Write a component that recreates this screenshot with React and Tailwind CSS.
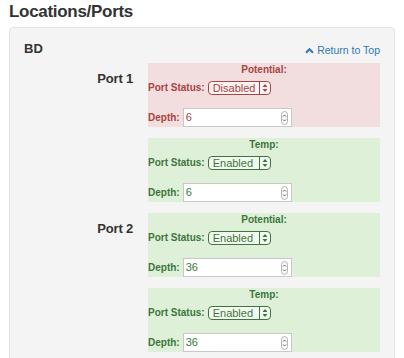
import { useState } from "react";

const tones = {
    error: {
        box: "bg-[#f2dede]",
        text: "text-[#a94442]",
        border: "border-[#a94442]",
        select: "bg-[#fbf3f3]",
    },
    success: {
        box: "bg-[#dff0d8]",
        text: "text-[#3c763d]",
        border: "border-[#3c763d]",
        select: "bg-[#f3f9f0]",
    },
};

const ChevronUp = () => (
    <svg width="9" height="7" viewBox="0 0 10 8" className="mr-[3px]">
        <path d="M1 6.5 L5 2.5 L9 6.5" fill="none" stroke="#2f7ab8" strokeWidth="2.4" strokeLinejoin="miter" />
    </svg>
);

const SelectArrows = ({ color }) => (
    <svg width="6" height="10" viewBox="0 0 6 10">
        <path d="M3 1 L5.5 4 L0.5 4 Z M3 9 L5.5 6 L0.5 6 Z" fill={color} />
    </svg>
);

const Spinner = () => (
    <div className="flex flex-col items-center justify-center w-[7px] h-[14px] rounded-full border border-[#b5b5b5] bg-[#fafafa]">
        <svg width="5" height="10" viewBox="0 0 5 10">
            <path d="M1 3.5 L2.5 2 L4 3.5 M1 6.5 L2.5 8 L4 6.5" fill="none" stroke="#555" strokeWidth="0.9" />
        </svg>
    </div>
);

const StatusBox = ({ title, tone, status, depth }) => {
    const t = tones[tone];
    const arrowColor = tone === "error" ? "#a94442" : "#3c763d";
    return (
        <div className={`${t.box} h-[64px] mb-[11px] text-[10px] font-bold ${t.text}`}>
            <div className="text-center leading-[14px]">{title}</div>
            <div className="flex items-center mt-[4px] h-[14px]">
                <span className="leading-[14px]">Port Status:</span>
                <div className={`ml-[3px] flex items-center h-[14px] w-[63px] rounded-[4px] border ${t.border} ${t.select}`}>
                    <span className="flex-1 pl-[4px] font-normal text-[11px] leading-[12px]">{status}</span>
                    <div className={`flex items-center justify-center w-[11px] h-full border-l ${t.border}`}>
                        <SelectArrows color={arrowColor} />
                    </div>
                </div>
            </div>
            <div className="flex items-center mt-[13px] h-[19px]">
                <span className="leading-[14px]">Depth:</span>
                <div className="ml-[3px] flex items-center h-[19px] w-[109px] bg-white border border-[#c8c8c8] pl-[2px] pr-[3px]">
                    <span className="flex-1 font-normal text-[11px]">{depth}</span>
                    <Spinner />
                </div>
            </div>
        </div>
    );
};

const ports = [
    {
        name: "Port 1",
        boxes: [
            { title: "Potential:", tone: "error", status: "Disabled", depth: "6" },
            { title: "Temp:", tone: "success", status: "Enabled", depth: "6" },
        ],
    },
    {
        name: "Port 2",
        boxes: [
            { title: "Potential:", tone: "success", status: "Enabled", depth: "36" },
            { title: "Temp:", tone: "success", status: "Enabled", depth: "36" },
        ],
    },
];

const App = () => {
    const [data] = useState(ports);

    return (
        <div className="w-[404px] h-[358px] overflow-hidden bg-white pl-[9px] font-['Liberation_Sans',Arial,sans-serif] text-[#333]">
            <h3 className="text-[17px] font-bold leading-[22px] pt-[1px] tracking-[-0.3px]">Locations/Ports</h3>

            {/* Well */}
            <div className="mt-[4px] w-[386px] bg-[#f4f4f4] border border-[#e3e3e3] rounded-[4px] pt-[14px]">
                <div className="flex items-center justify-between pl-[14px] pr-[14px] h-[14px]">
                    <span className="text-[13px] font-bold">BD</span>
                    <a href="#" className="flex items-center text-[10.5px] text-[#2f7ab8] mt-[3px]">
                        <ChevronUp />
                        Return to Top
                    </a>
                </div>

                <div className="mt-[7px]">
                    {data.map((port) => (
                        <div key={port.name} className="flex">
                            <div className="w-[123px] text-right pt-[8px] text-[13px] font-bold leading-[15px] tracking-[-0.2px]">{port.name}</div>
                            <div className="ml-[15px] w-[232px]">
                                {port.boxes.map((b, i) => (
                                    <StatusBox key={i} {...b} />
                                ))}
                            </div>
                        </div>
                    ))}
                </div>
            </div>
        </div>
    );
};

export default App;
